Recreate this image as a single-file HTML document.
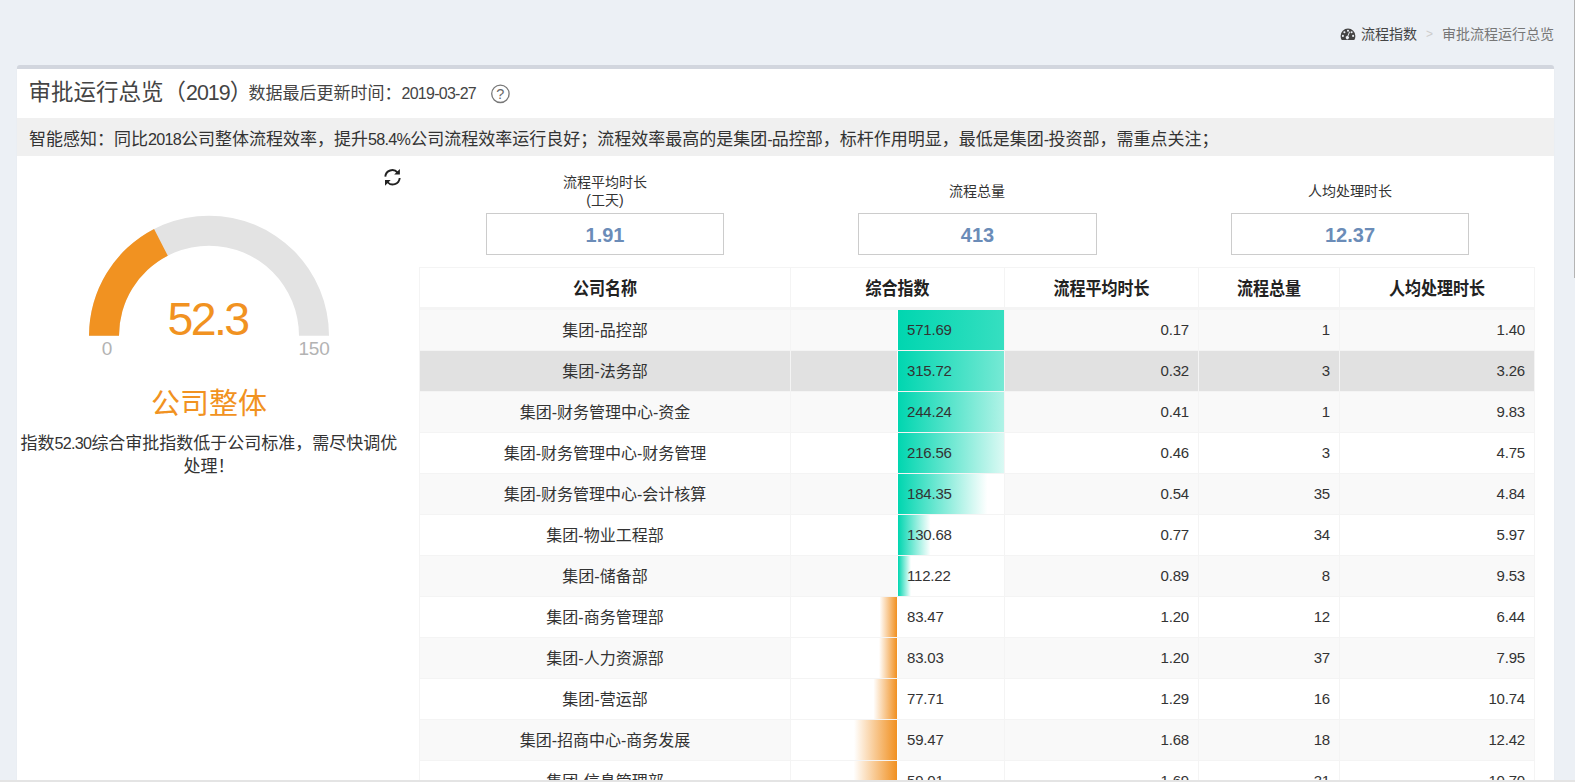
<!DOCTYPE html><html lang="zh-CN"><head><meta charset="utf-8"><title>审批流程运行总览</title><style>
*{box-sizing:border-box;margin:0;padding:0}
html,body{width:1575px;height:784px;overflow:hidden}
body{background:#ecf0f5;font-family:"Liberation Sans","Noto Sans CJK SC",sans-serif;color:#333;position:relative;font-size:16px}
.abs{position:absolute;white-space:nowrap}
.n{font-size:.95em;letter-spacing:-.045em}
#box{position:absolute;left:17px;top:65px;width:1537px;height:715px;background:#fff;border-top:4px solid #d2d6de;border-radius:3px 3px 0 0;box-shadow:0 1px 1px rgba(0,0,0,.1)}
#foot{position:absolute;left:0;top:780px;width:1575px;height:4px;background:#fff;border-top:2px solid #e4e4e4}
#sb{position:absolute;left:1574px;top:0;width:1px;height:278px;background:#b4b4b4}
.crumb{font-size:14px;line-height:20px;top:24px}
#title{left:28.5px;top:77px;font-size:22.5px;line-height:32px;color:#444}
#upd{left:248.5px;top:81px;font-size:17px;line-height:26px;color:#444}
#smart{position:absolute;left:17px;top:118px;width:1537px;height:38px;background:#f0f0f0;font-size:17px;line-height:42px;padding-left:12px;white-space:nowrap;color:#333}
.kl{font-size:14px;line-height:17.5px;text-align:center;width:238px;color:#333}
.kb{position:absolute;top:213px;width:238px;height:42px;border:1px solid #ccc;text-align:center;font-weight:bold;font-size:20px;line-height:42px;color:#6b8cb8;background:#fff}
#tbl{position:absolute;left:419px;top:267px;width:1116px;border-left:1px solid #f4f4f4;border-right:1px solid #f4f4f4}
.hr{position:absolute;left:0;top:0;width:1114px;height:42px;border-top:1px solid #f4f4f4;border-bottom:2px solid #f4f4f4;background:#fff}
.hr div{position:absolute;top:0;height:41px;line-height:41px;text-align:center;font-weight:bold;font-size:16px;color:#222}
.r{position:absolute;left:0;width:1114px;height:41px;border-top:1px solid #f4f4f4;background:#fff}
.r.s{background:#f9f9f9}
.r.h{background:#e1e1e1}
.r div{position:absolute;top:0;height:40px;line-height:40px;font-size:16px;color:#333;white-space:nowrap}
.c1{left:0;width:370px;text-align:center}
.r div.c1{line-height:42px}
.c2{left:371px;width:213px}
.c3{left:585px;width:193px;text-align:right;padding-right:9px}
.c4{left:779px;width:140px;text-align:right;padding-right:9px}
.c5{left:920px;width:194px;text-align:right;padding-right:9px}
.hr span{display:inline-block;transform:scaleY(1.12);transform-origin:50% 52%}
.v{position:absolute;top:0;width:1px;background:#f4f4f4}
.r .bl{left:371px;width:107px;background:#fff;border-right:1px solid #fff}
.r .br{left:477px;width:107px;background:#fff;border-left:1px solid #fff}
.r .tx{left:487px}
.r div.n{font-size:15px;letter-spacing:-.2px}
</style></head><body>
<svg class="abs" style="left:1340px;top:27px" width="16" height="14" viewBox="0 0 16 14"><path d="M0.6 8.9A7.4 7.4 0 0 1 15.4 8.9C15.4 10.4 15 11.8 14.3 12.9H1.7C1 11.8 0.6 10.4 0.6 8.9Z" fill="#444"/><g fill="#ecf0f5"><circle cx="2.9" cy="8.9" r="1.05"/><circle cx="4.4" cy="5.2" r="1.05"/><circle cx="8" cy="3.7" r="1.05"/><circle cx="11.6" cy="5.2" r="1.05"/><circle cx="13.1" cy="8.9" r="1.05"/><path d="M9.2 4.6 10 4.9 8.3 9.3A1.6 1.6 0 1 1 7.4 9Z"/></g></svg>
<div class="abs crumb" style="left:1361px;color:#444">流程指数</div>
<div class="abs crumb" style="left:1426px;color:#ccc;font-size:12px">&gt;</div>
<div class="abs crumb" style="left:1442px;color:#777">审批流程运行总览</div>
<div id="box"></div>
<div id="title" class="abs">审批运行总览（<span class="n">2019</span>）</div>
<div id="upd" class="abs">数据最后更新时间：<span class="n" style="font-size:.94em">2019-03-27</span></div>
<svg class="abs" style="left:490px;top:83px" width="22" height="22" viewBox="0 0 22 22"><circle cx="10.4" cy="10.8" r="8.7" fill="none" stroke="#777" stroke-width="1.3"/><text x="10.4" y="15.9" text-anchor="middle" font-family="Liberation Sans, sans-serif" font-size="14.5" fill="#6a6a6a">?</text></svg>
<div id="smart">智能感知：同比<span class="n">2018</span>公司整体流程效率，提升<span class="n">58.4%</span>公司流程效率运行良好；流程效率最高的是集团<span class="n">-</span>品控部，标杆作用明显，最低是集团<span class="n">-</span>投资部，需重点关注；</div>
<svg class="abs" style="left:383px;top:168px" width="19" height="19" viewBox="0 0 19 19"><g fill="none" stroke="#222" stroke-width="1.9"><path d="M2.3 8.6A7 7 0 0 1 14.6 4.6"/><path d="M16.7 10A7 7 0 0 1 4.4 14"/></g><path d="M16.9 0.9V6.6H11.2Z" fill="#222"/><path d="M2 17.7V12H7.7Z" fill="#222"/></svg>
<svg class="abs" style="left:0;top:0" width="420" height="360" viewBox="0 0 420 360"><path d="M89.00 335.70A120 120 0 0 1 329.00 335.70L299.00 335.70A90 90 0 0 0 119.00 335.70Z" fill="#e3e3e3"/><path d="M89.00 335.70A120 120 0 0 1 154.07 229.01L167.81 255.68A90 90 0 0 0 119.00 335.70Z" fill="#f19221"/><text x="207.6" y="335" text-anchor="middle" font-family="Liberation Sans, sans-serif" font-size="46.5" letter-spacing="-2.6" fill="#f19221">52.3</text><text x="107" y="355" text-anchor="middle" font-family="Liberation Sans, sans-serif" font-size="19" fill="#b3b3b3">0</text><text x="314" y="355" text-anchor="middle" font-family="Liberation Sans, sans-serif" font-size="19" letter-spacing="-0.3" fill="#b3b3b3">150</text></svg>
<div class="abs" style="left:17px;width:384px;top:384px;text-align:center;font-size:29px;line-height:40px;color:#f19221">公司整体</div>
<div class="abs" style="left:17px;width:384px;top:432px;text-align:center;font-size:17px;line-height:23px;color:#333;white-space:normal">指数<span class="n">52.30</span>综合审批指数低于公司标准，需尽快调优处理！</div>
<div class="abs kl" style="left:486px;top:174px">流程平均时长<br>(工天)</div>
<div class="abs kl" style="left:858px;top:183px">流程总量</div>
<div class="abs kl" style="left:1231px;top:183px">人均处理时长</div>
<div class="kb" style="left:486px">1.91</div>
<div class="kb" style="left:858px;width:239px">413</div>
<div class="kb" style="left:1231px">12.37</div>
<div id="tbl" style="height:517px"><div class="hr"><div class="c1"><span>公司名称</span></div><div class="c2"><span>综合指数</span></div><div class="c3" style="padding:0"><span>流程平均时长</span></div><div class="c4" style="padding:0"><span>流程总量</span></div><div class="c5" style="padding:0"><span>人均处理时长</span></div></div><div class="r s" style="top:42px"><div class="c1">集团-品控部</div><div class="br" style="background:linear-gradient(90deg,#00d6b0 0%,#fff 471.69%)"></div><div class="tx n">571.69</div><div class="c3 n">0.17</div><div class="c4 n">1</div><div class="c5 n">1.40</div></div><div class="r h" style="top:83px"><div class="c1">集团-法务部</div><div class="br" style="background:linear-gradient(90deg,#00d6b0 0%,#fff 215.72%)"></div><div class="tx n">315.72</div><div class="c3 n">0.32</div><div class="c4 n">3</div><div class="c5 n">3.26</div></div><div class="r s" style="top:124px"><div class="c1">集团-财务管理中心-资金</div><div class="br" style="background:linear-gradient(90deg,#00d6b0 0%,#fff 144.24%)"></div><div class="tx n">244.24</div><div class="c3 n">0.41</div><div class="c4 n">1</div><div class="c5 n">9.83</div></div><div class="r" style="top:165px"><div class="c1">集团-财务管理中心-财务管理</div><div class="br" style="background:linear-gradient(90deg,#00d6b0 0%,#fff 116.56%)"></div><div class="tx n">216.56</div><div class="c3 n">0.46</div><div class="c4 n">3</div><div class="c5 n">4.75</div></div><div class="r s" style="top:206px"><div class="c1">集团-财务管理中心-会计核算</div><div class="br" style="background:linear-gradient(90deg,#00d6b0 0%,#fff 84.35%)"></div><div class="tx n">184.35</div><div class="c3 n">0.54</div><div class="c4 n">35</div><div class="c5 n">4.84</div></div><div class="r" style="top:247px"><div class="c1">集团-物业工程部</div><div class="br" style="background:linear-gradient(90deg,#00d6b0 0%,#fff 30.68%)"></div><div class="tx n">130.68</div><div class="c3 n">0.77</div><div class="c4 n">34</div><div class="c5 n">5.97</div></div><div class="r s" style="top:288px"><div class="c1">集团-储备部</div><div class="br" style="background:linear-gradient(90deg,#00d6b0 0%,#fff 12.22%)"></div><div class="tx n">112.22</div><div class="c3 n">0.89</div><div class="c4 n">8</div><div class="c5 n">9.53</div></div><div class="r" style="top:329px"><div class="c1">集团-商务管理部</div><div class="bl" style="background:linear-gradient(90deg,#fff 83.47%,#f19020 100%)"></div><div class="tx n">83.47</div><div class="c3 n">1.20</div><div class="c4 n">12</div><div class="c5 n">6.44</div></div><div class="r s" style="top:370px"><div class="c1">集团-人力资源部</div><div class="bl" style="background:linear-gradient(90deg,#fff 83.03%,#f19020 100%)"></div><div class="tx n">83.03</div><div class="c3 n">1.20</div><div class="c4 n">37</div><div class="c5 n">7.95</div></div><div class="r" style="top:411px"><div class="c1">集团-营运部</div><div class="bl" style="background:linear-gradient(90deg,#fff 77.71%,#f19020 100%)"></div><div class="tx n">77.71</div><div class="c3 n">1.29</div><div class="c4 n">16</div><div class="c5 n">10.74</div></div><div class="r s" style="top:452px"><div class="c1">集团-招商中心-商务发展</div><div class="bl" style="background:linear-gradient(90deg,#fff 59.47%,#f19020 100%)"></div><div class="tx n">59.47</div><div class="c3 n">1.68</div><div class="c4 n">18</div><div class="c5 n">12.42</div></div><div class="r" style="top:493px"><div class="c1">集团-信息管理部</div><div class="bl" style="background:linear-gradient(90deg,#fff 59.01%,#f19020 100%)"></div><div class="tx n">59.01</div><div class="c3 n">1.69</div><div class="c4 n">31</div><div class="c5 n">10.70</div></div><div class="v" style="left:370px;height:517px"></div><div class="v" style="left:584px;height:517px"></div><div class="v" style="left:778px;height:517px"></div><div class="v" style="left:919px;height:517px"></div></div>
<div id="foot"></div><div id="sb"></div>
</body></html>
